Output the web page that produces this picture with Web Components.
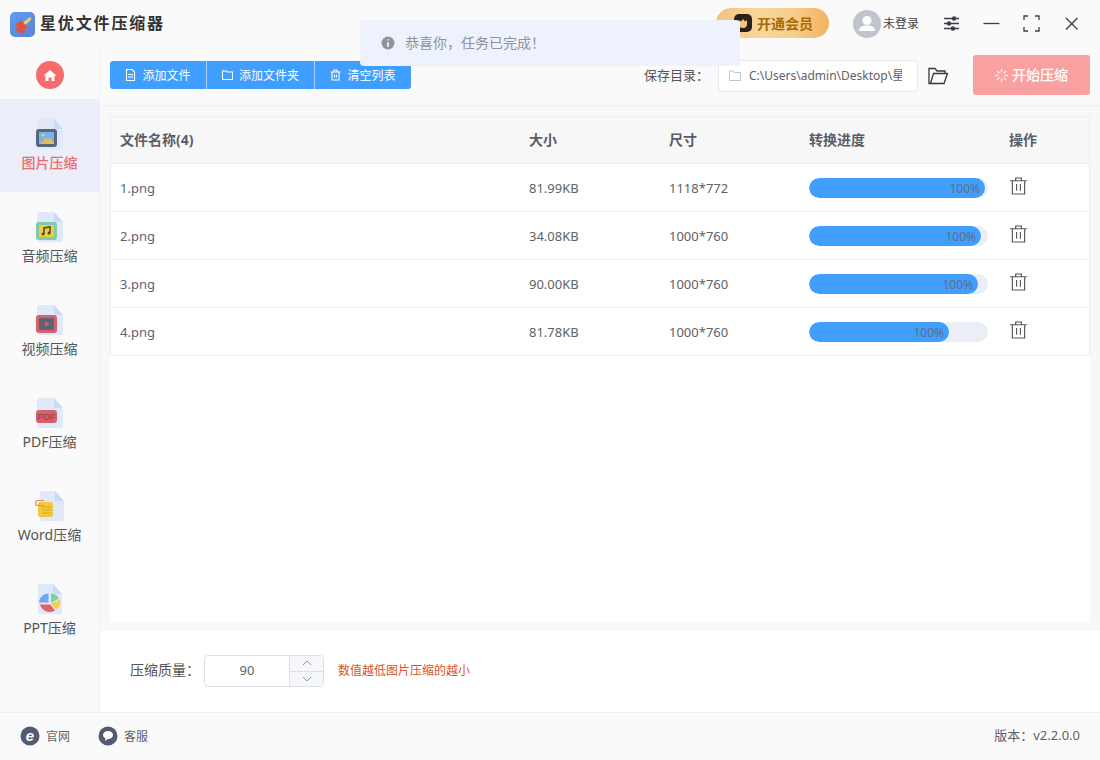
<!DOCTYPE html>
<html lang="zh">
<head>
<meta charset="utf-8">
<title>星优文件压缩器</title>
<style>
  html, body { margin: 0; padding: 0; }
  body {
    width: 1100px;
    height: 760px;
    overflow: hidden;
    font-family: "Noto Sans", "Noto Sans CJK SC", sans-serif;
    color: #606266;
  }
</style>
</head>
<body>
<compressor-app></compressor-app>

<script>
/* barra de titulo */
class TitleBar extends HTMLElement {
  connectedCallback() {
    this.attachShadow({ mode: 'open' }).innerHTML = `
      <style>
        :host { display: flex; align-items: center; height: 46px; background: #fafafa; padding: 0 20px 0 10px; }
        .logo { width: 25px; height: 25px; margin: 2px 5px 0 0; display: block; }
        h1 { margin: 0; font-size: 16px; line-height: 46px; font-weight: 700; color: #333; letter-spacing: 1.85px; flex: 1; }
        .vip { display: flex; align-items: center; width: 113px; height: 30px; border-radius: 15px;
          background: linear-gradient(90deg, #f3c27b 0%, #f8d79c 40%, #f6cd8c 70%, #f2b25f 100%);
          color: #a86b06; font-size: 14px; font-weight: 700; box-sizing: border-box; padding-left: 18px; }
        .vip svg { width: 18px; height: 18px; margin-right: 5px; }
        .user { display: flex; align-items: center; margin-left: 24px; font-size: 12px; color: #444; width: 66px; }
        .user svg { width: 28px; height: 28px; margin-right: 2px; margin-top: 1px; }
        .win { display: flex; align-items: center; margin-left: 24px; gap: 23px; }
        .win svg { width: 17px; height: 17px; display: block; fill: none; stroke: #3c3f46; stroke-width: 1.3; }
      </style>
      <svg class="logo" viewBox="0 0 25 25">
        <defs><linearGradient id="lg" x1="0" y1="0" x2="1" y2="1"><stop offset="0" stop-color="#5b9cf4"/><stop offset="1" stop-color="#5f82cf"/></linearGradient></defs>
        <rect width="25" height="25" rx="5" fill="url(#lg)"/>
        <path d="M13 10.500 20 5l1.500 2-6 6z" fill="#f1d268"/>
        <path d="M5 12.500l6-4 6 6-4 7c-3 0-6-2-8-5l2.500-1.500z" fill="#e0523f"/>
      </svg>
      <h1>星优文件压缩器</h1>
      <div class="vip">
        <svg viewBox="0 0 18 18"><rect width="18" height="18" rx="5" fill="#2a2118"/><path d="M5 6l2 1.500L9 5l2 2.500L13 6v4a4 4 0 0 1-8 0z" fill="#f4c67c"/></svg>
        <span>开通会员</span>
      </div>
      <div class="user">
        <svg viewBox="0 0 28 28"><circle cx="14" cy="14" r="14" fill="#c0c4cc"/><circle cx="14" cy="10.500" r="4.500" fill="#fff"/><path d="M6 21c0-4 3.500-5.500 8-5.500s8 1.500 8 5.500z" fill="#fff"/></svg>
        <span>未登录</span>
      </div>
      <div class="win">
        <svg viewBox="0 0 17 17"><path d="M1 3.500h15M1 8.500h15M1 13.500h15"/><circle cx="11" cy="3.500" r="1.600" fill="#3c3f46"/><circle cx="6" cy="8.500" r="1.600" fill="#3c3f46"/><circle cx="10" cy="13.500" r="1.600" fill="#3c3f46"/></svg>
        <svg viewBox="0 0 17 17"><path d="M0.500 8.500h16"/></svg>
        <svg viewBox="0 0 17 17"><path d="M1 5V1h4M12 1h4v4M16 12v4h-4M5 16H1v-4"/></svg>
        <svg viewBox="0 0 17 17"><path d="M3 3l11.500 11.500M14.500 3 3 14.500"/></svg>
      </div>`;
  }
}
customElements.define('title-bar', TitleBar);

/* iconos de la barra lateral: [izquierda del papel, ancho del papel, dibujo] */
const sideIcons = {
  img: [2, 26, `<rect x="1" y="10" width="21" height="18" rx="3" fill="#56697a"/><rect x="4" y="13" width="15" height="12" fill="#7cb2ea"/><circle cx="8" cy="16" r="1.500" fill="#f1d268"/><path d="M5 25l6-6 2 2 2-2 4 5v1z" fill="#e6bd52"/>`],
  audio: [2, 26, `<rect x="1" y="10" width="21" height="18" rx="3" fill="#7fcbaa"/><rect x="4" y="13" width="15" height="12" rx="1" fill="#ecd03f"/><path d="M9 22v-6l6-1v6" fill="none" stroke="#47473a" stroke-width="1.500"/><circle cx="8" cy="22" r="1.500" fill="#47473a"/><circle cx="14" cy="21" r="1.500" fill="#47473a"/>`],
  video: [2, 26, `<rect x="1" y="10" width="21" height="18" rx="3" fill="#d8606c"/><rect x="4" y="13" width="15" height="12" rx="1" fill="#5c6470"/><path d="M10 16l4.500 3-4.500 3z" fill="#d8606c"/>`],
  pdf: [2, 26, `<rect x="1" y="12" width="21" height="13" rx="3" fill="#d8606c"/><text x="11.500" y="22" font-size="9" font-family="Liberation Sans" text-anchor="middle" fill="#7a4750">PDF</text>`],
  word: [5, 24, `<rect x="3" y="11" width="15" height="15" rx="2" fill="#f3c83c"/><path d="M7 16h9M7 19h9M7 22h9" stroke="#e0a52f" stroke-width="1"/><path d="M9 9.500H3a2.500 2.500 0 0 0 0 5h6" fill="none" stroke="#e58a6c" stroke-width="1.200"/>`],
  ppt: [3, 24, `<path d="M13.500 9.500a9.500 9.500 0 0 0-9.500 9h9.500z" fill="#6ea6f0"/><path d="M16 9.500a9.500 9.500 0 0 1 8 5l-8 4.500z" fill="#7ccfa2"/><path d="M25 15.500a10 10 0 0 1-3.500 10L16 20z" fill="#f5cf45"/><path d="M5 20.500h10l5 6a10 10 0 0 1-15-6z" fill="#e0606a"/>`]
};

/* elemento del menu lateral */
class SideItem extends HTMLElement {
  connectedCallback() {
    const [left, w, art] = sideIcons[this.getAttribute('kind')];
    const right = left + w;
    this.attachShadow({ mode: 'open' }).innerHTML = `
      <style>
        :host { display: flex; flex-direction: column; align-items: center; height: 93px; box-sizing: border-box; padding-top: 20px; font-size: 14px; color: #555; }
        :host([active]) { background: #ebeef8; color: #ea6b6b; font-weight: 500; }
        svg { width: 30px; height: 31px; display: block; margin-bottom: 1px; overflow: visible; }
        span { line-height: 24px; }
      </style>
      <svg viewBox="0 0 30 31">
        <path d="M${left + 2} 0H${right - 9}l9 10v18a2 2 0 0 1-2 2H${left + 2}a2 2 0 0 1-2-2V2a2 2 0 0 1 2-2z" fill="#dfe9fa"/>
        <path d="M${right - 9} 0l9 10h-9z" fill="#c9dcf7"/>
        ${art}
      </svg>
      <span><slot></slot></span>`;
  }
}
customElements.define('side-item', SideItem);

class SideBar extends HTMLElement {
  connectedCallback() {
    this.attachShadow({ mode: 'open' }).innerHTML = `
      <style>
        :host { display: block; width: 100px; box-sizing: border-box; background: #fafafa; border-right: 1px solid #f0f0f0; }
        .home { height: 53px; display: flex; align-items: flex-start; justify-content: center; padding-top: 15px; box-sizing: border-box; }
        .home i { width: 28px; height: 28px; border-radius: 50%; background: #f56c6c; display: flex; align-items: center; justify-content: center; }
        .home svg { width: 12px; height: 11px; fill: #fff; }
      </style>
      <div class="home"><i><svg viewBox="0 0 12 11"><path d="M6 0l6 5.200-.8.900-.7-.5V11H7.500V7.500h-3V11H1.500V5.600l-.7.500L0 5.200z"/></svg></i></div>
      <slot></slot>`;
  }
}
customElements.define('side-bar', SideBar);

/* barra de herramientas */
class ToolBar extends HTMLElement {
  connectedCallback() {
    this.attachShadow({ mode: 'open' }).innerHTML = `
      <style>
        :host { display: flex; align-items: center; height: 60px; box-sizing: border-box; background: #fafafa; border-bottom: 1px solid #f0f0f0; padding: 0 10px 0 10px; }
        .group { display: flex; height: 28px; margin-top: -1px; background: #409eff; border-radius: 3px; color: #fff; font-size: 12px; }
        .group div { display: flex; align-items: center; justify-content: center; gap: 6px; border-right: 1px solid #a9d3ff; box-sizing: border-box; }
        .group div:last-child { border-right: 0; }
        .group svg { width: 11px; height: 12px; fill: none; stroke: #fff; stroke-width: 1.100; }
        .save { margin: 0 9px 2px auto; font-size: 13px; color: #555; }
        .save b { font-weight: 400; font-family: "Noto Sans CJK TC", sans-serif; }
        .path { display: flex; align-items: center; width: 200px; height: 32px; box-sizing: border-box; border: 1px solid #e4e7ed; border-radius: 4px; background: #fff; padding-left: 10px; font-size: 12px; color: #606266; overflow: hidden; white-space: nowrap; }
        .path svg { width: 12px; height: 11px; flex: none; margin-right: 8px; fill: none; stroke: #c0c4cc; }
        .path span { display: block; width: 153px; overflow: hidden; margin-bottom: 2px; }
        .folder { width: 20px; height: 18px; margin-left: 10px; fill: none; stroke: #33363c; stroke-width: 1.300; }
        .start { display: flex; align-items: center; justify-content: center; gap: 4px; width: 117px; height: 40px; margin-left: 25px; margin-top: -1px; border-radius: 3px; background: #f9a0a0; color: #fff; font-size: 14px; font-weight: 500; }
        .start span { margin-bottom: 2px; }
        .start svg { width: 13px; height: 13px; stroke: #fff; stroke-width: 1.500; opacity: .75; }
      </style>
      <div class="group">
        <div style="width:97px">
          <svg viewBox="0 0 11 12"><path d="M1.500.500h5.500l2.500 2.500v8.500h-8zM3 5.500h5M3 8h5"/></svg>添加文件
        </div>
        <div style="width:108px">
          <svg viewBox="0 0 11 12"><path d="M.500 2h3.500l1 1h5.500v7.500H.500z"/></svg>添加文件夹
        </div>
        <div style="width:96px">
          <svg viewBox="0 0 11 12"><path d="M.500 3h10M2 3v8h7V3M4 3V1h3v2M4.500 5.500v3M6.500 5.500v3"/></svg>清空列表
        </div>
      </div>
      <span class="save">保存目录<b>：</b></span>
      <div class="path">
        <svg viewBox="0 0 12 11"><path d="M.500 1h4l1 1.500h6v8H.500z"/></svg>
        <span>C:\\Users\\admin\\Desktop\\星优</span>
      </div>
      <svg class="folder" viewBox="0 0 20 18"><path d="M2 16.500H1V1.500h6l2 2.500h8v2.500M2.500 16.500 5.500 6.500h14l-3.500 10z"/></svg>
      <div class="start">
        <svg viewBox="0 0 13 13"><path d="M6.500 0v3.500M6.500 9.500V13M0 6.500h3.500M9.500 6.500H13M2 2l2.500 2.500M8.500 8.500 11 11M11 2 8.500 4.500M4.500 8.500 2 11"/></svg>
        <span>开始压缩</span>
      </div>`;
  }
}
customElements.define('tool-bar', ToolBar);

/* fila de la tabla de archivos */
class FileRow extends HTMLElement {
  connectedCallback() {
    const a = n => this.getAttribute(n);
    this.attachShadow({ mode: 'open' }).innerHTML = `
      <style>
        :host { display: grid; grid-template-columns: 409px 140px 140px 200px 1fr; height: 48px; box-sizing: border-box; border-bottom: 1px solid #ebeef5; background: #fff; font-size: 13px; color: #606266; align-items: center; padding-left: 9px; }
        .track { display: block; width: 179px; height: 20px; border-radius: 10px; background: #ebeef5; overflow: hidden; margin-top: 1px; }
        .bar { display: block; height: 100%; border-radius: 10px; background: #409eff; text-align: right; font-size: 12px; line-height: 22px; color: #5f6f85; padding-right: 5px; box-sizing: border-box; }
        svg { display: block; width: 17px; height: 18px; margin: -4px 0 0 1px; fill: none; stroke: #555; stroke-width: 1.200; }
      </style>
      <div>${a('name')}</div>
      <div>${a('size')}</div>
      <div>${a('dim')}</div>
      <div><span class="track"><span class="bar" style="width:${a('bar')}px">100%</span></span></div>
      <div><svg viewBox="0 0 18 19"><path d="M0 4h18M2.500 4v14h13V4M6 4V1h6v3M7 7.500v7M11 7.500v7"/></svg></div>`;
  }
}
customElements.define('file-row', FileRow);

/* tabla de archivos */
class FileTable extends HTMLElement {
  connectedCallback() {
    this.attachShadow({ mode: 'open' }).innerHTML = `
      <style>
        :host { display: block; flex: 1; margin: 10px 10px 0; background: #fff; }
        .box { border: 1px solid #ebeef5; border-bottom: 0; }
        .head { display: grid; grid-template-columns: 409px 140px 140px 200px 1fr; height: 47px; box-sizing: border-box; padding: 0 0 2px 9px; border-bottom: 1px solid #ebeef5; background: #f7f7f7; align-items: center; font-size: 14px; font-weight: 700; color: #5a5e66; }
      </style>
      <div class="box">
        <div class="head"><div>文件名称(4)</div><div>大小</div><div>尺寸</div><div>转换进度</div><div>操作</div></div>
        <slot></slot>
      </div>`;
  }
}
customElements.define('file-table', FileTable);

/* calidad de compresion */
class QualityBar extends HTMLElement {
  connectedCallback() {
    this.attachShadow({ mode: 'open' }).innerHTML = `
      <style>
        :host { display: flex; align-items: center; height: 81px; margin-top: 9px; box-sizing: border-box; padding: 0 0 1px 30px; background: #fff; font-size: 14px; color: #555; }
        .lbl { margin-bottom: 4px; }
        b { font-weight: 400; font-family: "Noto Sans CJK TC", sans-serif; }
        .num { display: flex; width: 120px; height: 32px; margin: 0 14px 0 4px; box-sizing: border-box; border: 1px solid #dcdfe6; border-radius: 4px; overflow: hidden; }
        .val { flex: 1; text-align: center; line-height: 28px; font-size: 13px; color: #606266; }
        .arrows { width: 33px; border-left: 1px solid #dcdfe6; background: #f5f7fa; display: flex; flex-direction: column; }
        .arrows i { flex: 1; display: flex; align-items: center; justify-content: center; }
        .arrows i + i { border-top: 1px solid #dcdfe6; }
        svg { width: 10px; height: 6px; fill: none; stroke: #909399; }
        .tip { color: #d9532c; font-size: 12px; margin-bottom: 2px; }
      </style>
      <span class="lbl">压缩质量<b>：</b></span>
      <div class="num">
        <div class="val">90</div>
        <div class="arrows">
          <i><svg viewBox="0 0 10 6"><path d="M1 5l4-4 4 4"/></svg></i>
          <i><svg viewBox="0 0 10 6"><path d="M1 1l4 4 4-4"/></svg></i>
        </div>
      </div>
      <span class="tip">数值越低图片压缩的越小</span>`;
  }
}
customElements.define('quality-bar', QualityBar);

/* pie de la ventana */
class AppFooter extends HTMLElement {
  connectedCallback() {
    this.attachShadow({ mode: 'open' }).innerHTML = `
      <style>
        :host { display: flex; align-items: center; height: 48px; box-sizing: border-box; border-top: 1px solid #efefef; background: #fafafa; padding: 0 20px 2px; font-size: 12px; color: #606266; }
        a { display: flex; align-items: center; gap: 6px; margin-right: 28px; }
        svg { width: 20px; height: 20px; display: block; margin-top: 1px; }
        .ver { margin: 0 0 2px auto; font-size: 13px; }
        .ver b { font-weight: 400; font-family: "Noto Sans CJK TC", sans-serif; }
      </style>
      <a>
        <svg viewBox="0 0 20 20"><circle cx="10" cy="10" r="9.500" fill="#535b73"/><text x="10" y="15" font-size="15" font-weight="700" font-style="italic" font-family="Liberation Sans" text-anchor="middle" fill="#fff">e</text></svg>
        <span>官网</span>
      </a>
      <a>
        <svg viewBox="0 0 20 20"><circle cx="10" cy="10" r="9.500" fill="#535b73"/><path d="M10 5c3 0 5 1.800 5 4s-2 4-5 4l-3 2 .5-2.500C6 11.500 5 10.500 5 9c0-2.200 2-4 5-4z" fill="#fff"/></svg>
        <span>客服</span>
      </a>
      <span class="ver">版本<b>：</b>v2.2.0.0</span>`;
  }
}
customElements.define('app-footer', AppFooter);

/* aviso flotante */
class ToastMsg extends HTMLElement {
  connectedCallback() {
    this.attachShadow({ mode: 'open' }).innerHTML = `
      <style>
        :host { position: absolute; left: 360px; top: 20px; width: 380px; height: 46px; box-sizing: border-box; display: flex; align-items: center; padding-left: 21px; border-radius: 4px; background: #edf2fc; color: #909399; font-size: 14px; }
        svg { width: 14px; height: 14px; margin-right: 10px; }
        span { margin-bottom: 2px; }
      </style>
      <svg viewBox="0 0 14 14"><circle cx="7" cy="7" r="6.500" fill="#909399"/><path d="M7.500 3.200v1.400M7 6.200v4.600" stroke="#edf2fc" stroke-width="1.800"/></svg>
      <span>恭喜你，任务已完成！</span>`;
  }
}
customElements.define('toast-msg', ToastMsg);

/* aplicacion completa */
class CompressorApp extends HTMLElement {
  connectedCallback() {
    this.attachShadow({ mode: 'open' }).innerHTML = `
      <style>
        :host { display: flex; flex-direction: column; position: relative; width: 1100px; height: 760px; background: #fafafa; }
        .mid { flex: 1; display: flex; min-height: 0; }
        main { flex: 1; display: flex; flex-direction: column; min-width: 0; background: #f8f8f8; }
      </style>
      <title-bar></title-bar>
      <div class="mid">
        <side-bar>
          <side-item kind="img" active>图片压缩</side-item>
          <side-item kind="audio">音频压缩</side-item>
          <side-item kind="video">视频压缩</side-item>
          <side-item kind="pdf">PDF压缩</side-item>
          <side-item kind="word">Word压缩</side-item>
          <side-item kind="ppt">PPT压缩</side-item>
        </side-bar>
        <main>
          <tool-bar></tool-bar>
          <file-table>
            <file-row name="1.png" size="81.99KB" dim="1118*772" bar="176"></file-row>
            <file-row name="2.png" size="34.08KB" dim="1000*760" bar="172"></file-row>
            <file-row name="3.png" size="90.00KB" dim="1000*760" bar="169"></file-row>
            <file-row name="4.png" size="81.78KB" dim="1000*760" bar="140"></file-row>
          </file-table>
          <quality-bar></quality-bar>
        </main>
      </div>
      <app-footer></app-footer>
      <toast-msg></toast-msg>`;
  }
}
customElements.define('compressor-app', CompressorApp);
</script>
</body>
</html>
